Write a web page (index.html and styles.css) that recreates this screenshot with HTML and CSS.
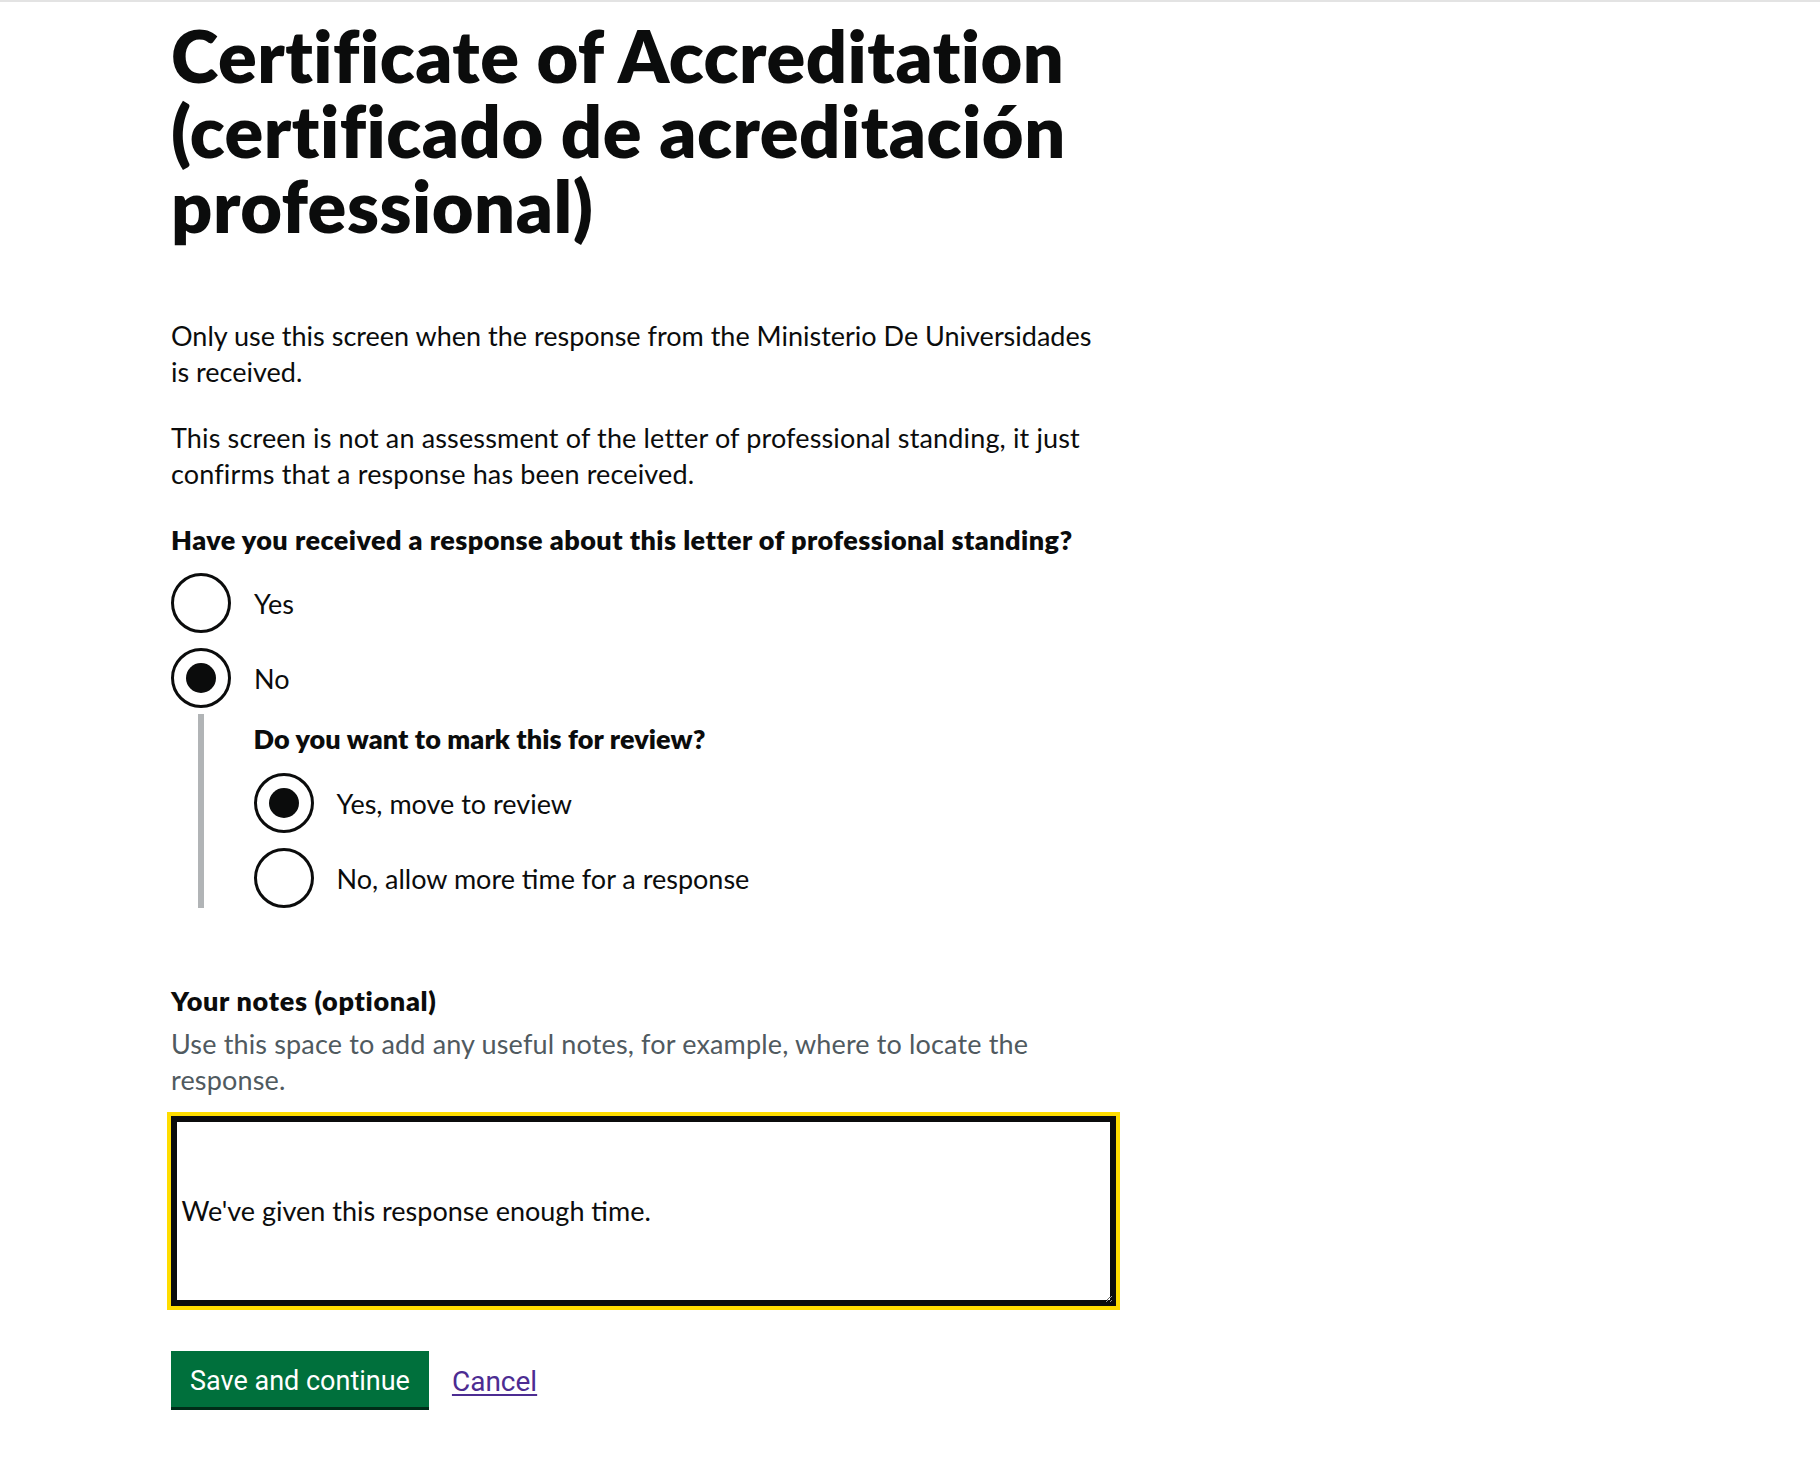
FILE: index.html
```html
<!DOCTYPE html>
<html lang="en">
<head>
<meta charset="utf-8">
<title>Certificate of Accreditation</title>
<link rel="stylesheet" href="styles.css">
</head>
<body>
<div class="topline"></div>
<main class="page">
  <div class="column">
    <h1 class="title">Certificate of Accreditation (certificado de acreditación professional)</h1>
    <p class="body">Only use this screen when the response from the Ministerio De Universidades is received.</p>
    <p class="body">This screen is not an assessment of the letter of professional standing, it just confirms that a response has been received.</p>

    <fieldset class="fieldset">
      <legend class="legend">Have you received a response about this letter of professional standing?</legend>
      <div class="radios">
        <label class="radio"><span class="circle"></span><span class="radio-text">Yes</span></label>
        <label class="radio radio-last"><span class="circle is-checked"></span><span class="radio-text">No</span></label>
        <div class="conditional">
          <fieldset class="fieldset">
            <legend class="legend">Do you want to mark this for review?</legend>
            <div class="radios">
              <label class="radio"><span class="circle is-checked"></span><span class="radio-text">Yes, move to review</span></label>
              <label class="radio radio-last"><span class="circle"></span><span class="radio-text">No, allow more time for a response</span></label>
            </div>
          </fieldset>
        </div>
      </div>
    </fieldset>

    <div class="notes">
      <label class="label" for="notes">Your notes (optional)</label>
      <div class="hint">Use this space to add any useful notes, for example, where to locate the response.</div>
      <textarea class="textarea" id="notes" rows="5">


We've given this response enough time.</textarea>
    </div>

    <div class="actions">
      <button class="button" type="button">Save and continue</button>
      <a class="link" href="#">Cancel</a>
    </div>
  </div>
</main>
</body>
</html>
```

FILE: styles.css
```css
html, body {
  margin: 0;
  padding: 0;
  background: #ffffff;
}

body {
  font-family: "Lato", "Liberation Sans", sans-serif;
  color: #0b0c0c;
}

.topline {
  height: 2px;
  background: #e3e3e3;
}

.page {
  padding: 15.6px 0 60px 171px;
}

.column {
  width: 945px;
}

.title {
  margin: 0 0 75px 0;
  font-size: 72px;
  line-height: 75px;
  font-weight: 800;
  letter-spacing: 0.5px;
}

.body {
  margin: 0 0 30px 0;
  font-size: 27px;
  line-height: 36px;
}

.body + .body {
  letter-spacing: 0.15px;
}

.fieldset {
  margin: 0;
  padding: 0;
  border: 0;
  min-width: 0;
}

.legend {
  padding: 0;
  margin: 0 0 15px 0;
  font-size: 27px;
  line-height: 36px;
  font-weight: 800;
  letter-spacing: 0.45px;
}

.radios {
  display: flex;
  flex-direction: column;
}

.radio {
  display: flex;
  align-items: center;
  gap: 23px;
  height: 60px;
  margin-bottom: 15px;
  font-size: 27px;
  line-height: 36px;
  cursor: pointer;
}

.radio-last {
  margin-bottom: 0;
}

.radio-text {
  padding-top: 2px;
}

.circle {
  box-sizing: border-box;
  flex: 0 0 60px;
  width: 60px;
  height: 60px;
  border: 3px solid #0b0c0c;
  border-radius: 50%;
  display: flex;
  align-items: center;
  justify-content: center;
}

.circle.is-checked::after {
  content: "";
  width: 30px;
  height: 30px;
  border-radius: 50%;
  background: #0b0c0c;
}

.conditional {
  margin: 6px 0 0 27px;
  padding: 7.5px 0 0 49.5px;
  border-left: 6px solid #b1b4b6;
}

.conditional .legend {
  margin-bottom: 16px;
  letter-spacing: 0.1px;
}

.notes {
  margin-top: 74.5px;
  display: flex;
  flex-direction: column;
}

.label {
  font-size: 27px;
  line-height: 36px;
  font-weight: 800;
  letter-spacing: 0.7px;
  margin-bottom: 7px;
}

.hint {
  font-size: 27px;
  line-height: 36px;
  color: #505a5f;
  letter-spacing: 0.15px;
  margin-bottom: 18px;
}

.textarea {
  box-sizing: border-box;
  display: block;
  width: 945px;
  height: 190px;
  margin: 0;
  padding: 7.5px;
  border: 3px solid #0b0c0c;
  border-radius: 0;
  outline: 4.5px solid #ffdd00;
  outline-offset: 0;
  box-shadow: inset 0 0 0 3px #0b0c0c;
  font-family: "Lato", "Liberation Sans", sans-serif;
  font-size: 27px;
  line-height: 33.75px;
  color: #0b0c0c;
  background: #ffffff;
  resize: vertical;
}

.actions {
  margin-top: 45px;
  display: flex;
  align-items: flex-start;
  gap: 23px;
}

.button {
  box-sizing: border-box;
  height: 56px;
  margin: 0;
  padding: 5px 19px 0 19px;
  border: 0;
  border-radius: 0;
  background: #00703c;
  box-shadow: 0 3px 0 #002d18;
  color: #ffffff;
  font-family: "Roboto", "Liberation Sans", sans-serif;
  font-size: 27px;
  line-height: 51px;
  cursor: pointer;
}

.link {
  font-family: "Roboto", "Liberation Sans", sans-serif;
  font-size: 28px;
  line-height: 56px;
  padding-top: 3px;
  color: #4c2c92;
  text-decoration: underline;
  text-decoration-thickness: 2px;
  text-underline-offset: 3px;
}
```
